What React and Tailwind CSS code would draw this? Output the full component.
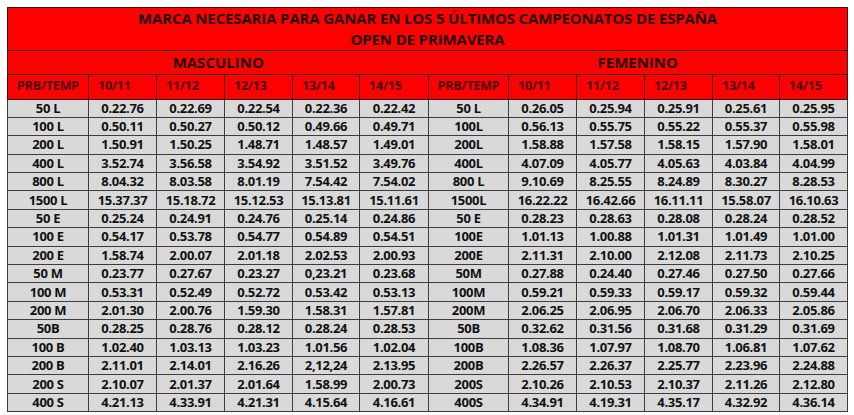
import React from "react";

const YEARS = ["10/11", "11/12", "12/13", "13/14", "14/15"];

const ROWS = [
  ["50 L", ["0.22.76", "0.22.69", "0.22.54", "0.22.36", "0.22.42"], "50 L", ["0.26.05", "0.25.94", "0.25.91", "0.25.61", "0.25.95"]],
  ["100 L", ["0.50.11", "0.50.27", "0.50.12", "0.49.66", "0.49.71"], "100L", ["0.56.13", "0.55.75", "0.55.22", "0.55.37", "0.55.98"]],
  ["200 L", ["1.50.91", "1.50.25", "1.48.71", "1.48.57", "1.49.01"], "200L", ["1.58.88", "1.57.58", "1.58.15", "1.57.90", "1.58.01"]],
  ["400 L", ["3.52.74", "3.56.58", "3.54.92", "3.51.52", "3.49.76"], "400L", ["4.07.09", "4.05.77", "4.05.63", "4.03.84", "4.04.99"]],
  ["800 L", ["8.04.32", "8.03.58", "8.01.19", "7.54.42", "7.54.02"], "800 L", ["9.10.69", "8.25.55", "8.24.89", "8.30.27", "8.28.53"]],
  ["1500 L", ["15.37.37", "15.18.72", "15.12.53", "15.13.81", "15.11.61"], "1500L", ["16.22.22", "16.42.66", "16.11.11", "15.58.07", "16.10.63"]],
  ["50 E", ["0.25.24", "0.24.91", "0.24.76", "0.25.14", "0.24.86"], "50 E", ["0.28.23", "0.28.63", "0.28.08", "0.28.24", "0.28.52"]],
  ["100 E", ["0.54.17", "0.53.78", "0.54.77", "0.54.89", "0.54.51"], "100E", ["1.01.13", "1.00.88", "1.01.31", "1.01.49", "1.01.00"]],
  ["200 E", ["1.58.74", "2.00.07", "2.01.18", "2.02.53", "2.00.93"], "200E", ["2.11.31", "2.10.00", "2.12.08", "2.11.73", "2.10.25"]],
  ["50 M", ["0.23.77", "0.27.67", "0.23.27", "0,23.21", "0.23.68"], "50M", ["0.27.88", "0.24.40", "0.27.46", "0.27.50", "0.27.66"]],
  ["100 M", ["0.53.31", "0.52.49", "0.52.72", "0.53.42", "0.53.13"], "100M", ["0.59.21", "0.59.33", "0.59.17", "0.59.32", "0.59.44"]],
  ["200 M", ["2.01.30", "2.00.76", "1.59.30", "1.58.31", "1.57.81"], "200M", ["2.06.25", "2.06.95", "2.06.70", "2.06.33", "2.05.86"]],
  ["50B", ["0.28.25", "0.28.76", "0.28.12", "0.28.24", "0.28.53"], "50B", ["0.32.62", "0.31.56", "0.31.68", "0.31.29", "0.31.69"]],
  ["100 B", ["1.02.40", "1.03.13", "1.03.23", "1.01.56", "1.02.04"], "100B", ["1.08.36", "1.07.97", "1.08.70", "1.06.81", "1.07.62"]],
  ["200 B", ["2.11.01", "2.14.01", "2.16.26", "2,12,24", "2.13.95"], "200B", ["2.26.57", "2.26.37", "2.25.77", "2.23.96", "2.24.88"]],
  ["200 S", ["2.10.07", "2.01.37", "2.01.64", "1.58.99", "2.00.73"], "200S", ["2.10.26", "2.10.53", "2.10.37", "2.11.26", "2.12.80"]],
  ["400 S", ["4.21.13", "4.33.91", "4.21.31", "4.15.64", "4.16.61"], "400S", ["4.34.91", "4.19.31", "4.35.17", "4.32.92", "4.36.14"]],
];

const WIDTHS = [81, 68, 68, 68, 67, 69, 80, 68, 68, 68, 67, 68];

export default function App() {
  const cell = "border border-[#3c3c3c] p-0 text-center";
  const head = "border border-[#3a1010] p-0 text-left pl-[9px] text-[#4a0000]";

  return (
    <div className="min-h-screen bg-white pt-[7px] pl-[7px] font-['Open_Sans',sans-serif] font-bold">
      <table className="table-fixed border-collapse w-[841px] border border-[#2a2a2a]">
        <colgroup>
          {WIDTHS.map((w, i) => (
            <col key={i} style={{ width: w }} />
          ))}
        </colgroup>
        <thead className="bg-[#ff0000]">
          <tr className="h-[42px]">
            <th colSpan={12} className="border border-[#3a1010] p-0 text-center text-[15px] leading-[21px] tracking-[-0.15px] text-[#1e0505] font-bold">
              MARCA NECESARIA PARA GANAR EN LOS 5 ÚLTIMOS CAMPEONATOS DE ESPAÑA
              <br />
              OPEN DE PRIMAVERA
            </th>
          </tr>
          <tr className="h-[23px] text-[15px] text-[#1e0505]">
            <th colSpan={6} className="border-y border-[#3a1010] p-0 text-center font-bold">MASCULINO</th>
            <th colSpan={6} className="border-y border-[#3a1010] p-0 text-center font-bold">FEMENINO</th>
          </tr>
          <tr className="h-[25px] text-[12.5px] tracking-[-0.2px]">
            <th className="border border-[#3a1010] p-0 text-center text-[#4a0000] font-bold">PRB/TEMP</th>
            {YEARS.map((y) => (
              <th key={"m" + y} className={head}>{y}</th>
            ))}
            <th className="border border-[#3a1010] p-0 text-center text-[#4a0000] font-bold">PRB/TEMP</th>
            {YEARS.map((y) => (
              <th key={"f" + y} className={head}>{y}</th>
            ))}
          </tr>
        </thead>
        <tbody className="bg-[#d9d9d9] text-[13px] tracking-[-0.3px] text-[#111]">
          {ROWS.map(([m, mv, f, fv]) => (
            <tr key={m} className="h-[18.4px] leading-none">
              <td className={cell}>{m}</td>
              {mv.map((v, i) => (
                <td key={i} className={cell}>{v}</td>
              ))}
              <td className={cell}>{f}</td>
              {fv.map((v, i) => (
                <td key={i} className={cell}>{v}</td>
              ))}
            </tr>
          ))}
        </tbody>
      </table>
    </div>
  );
}
